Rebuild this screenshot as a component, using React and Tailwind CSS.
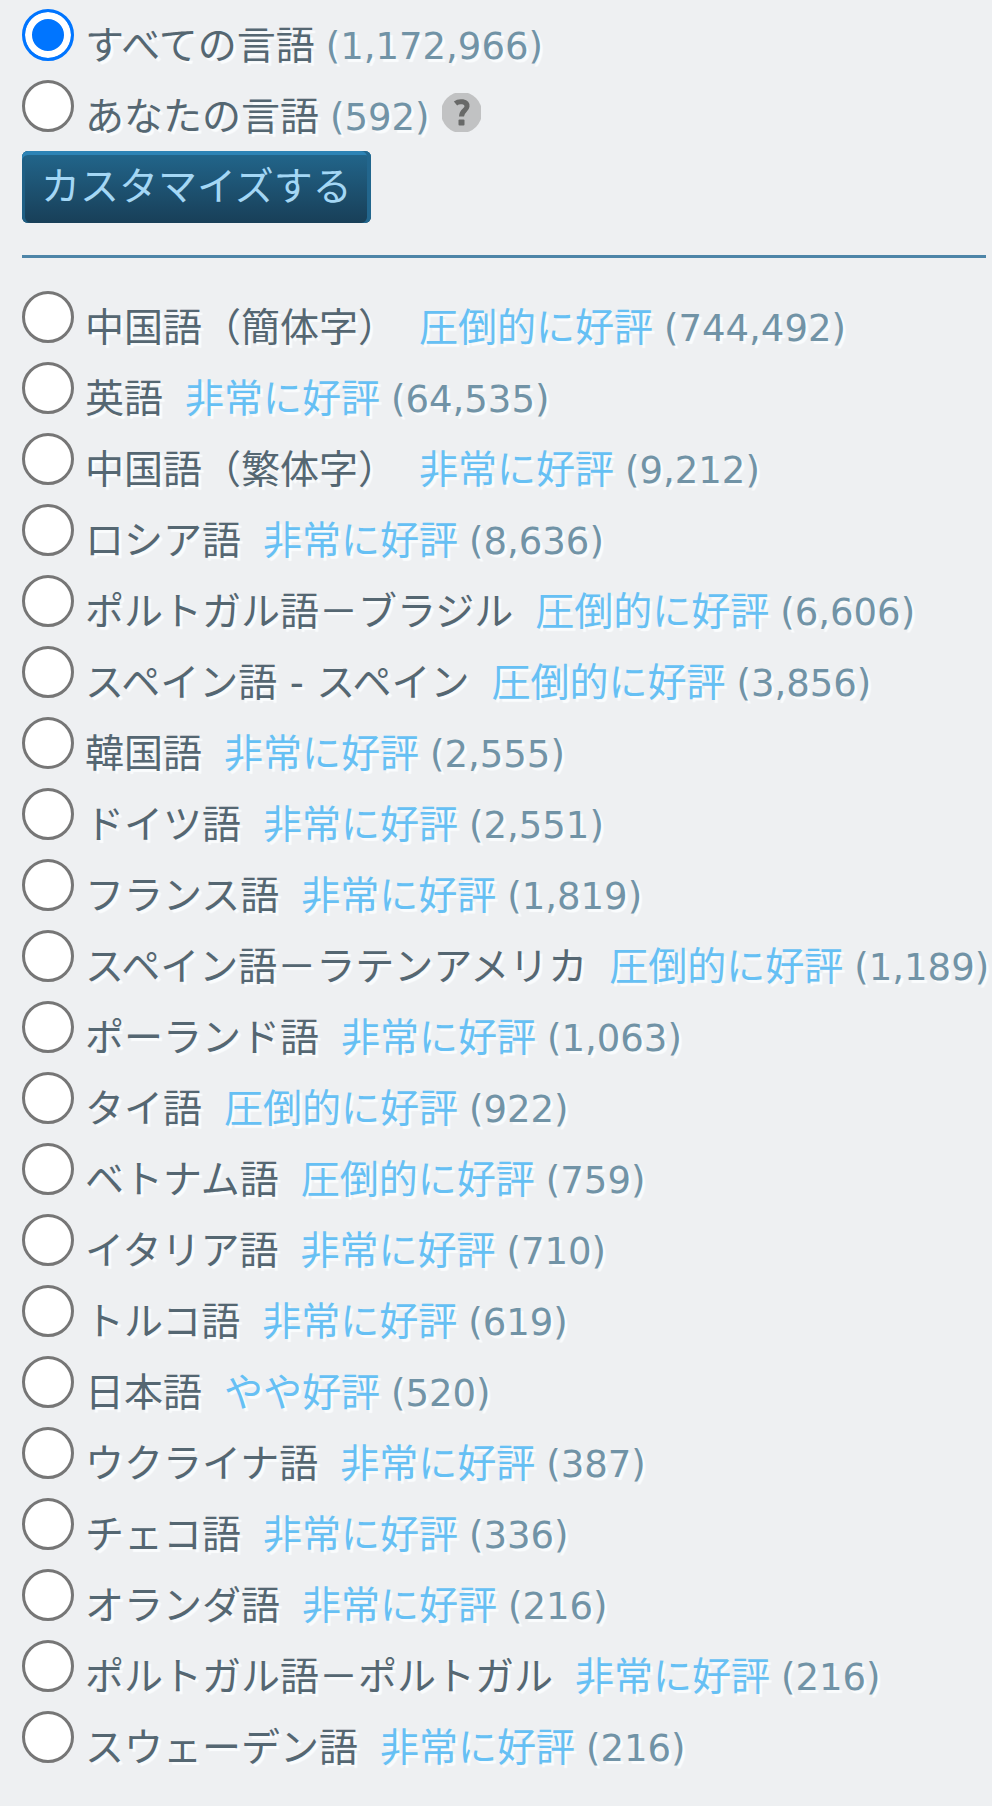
import { useState } from "react";

const languages = [
  { id: "schinese", name: "中国語（簡体字）", rating: "圧倒的に好評", count: "744,492" },
  { id: "english", name: "英語", rating: "非常に好評", count: "64,535" },
  { id: "tchinese", name: "中国語（繁体字）", rating: "非常に好評", count: "9,212" },
  { id: "russian", name: "ロシア語", rating: "非常に好評", count: "8,636" },
  { id: "brazilian", name: "ポルトガル語－ブラジル", rating: "圧倒的に好評", count: "6,606" },
  { id: "spanish", name: "スペイン語 - スペイン", rating: "圧倒的に好評", count: "3,856" },
  { id: "korean", name: "韓国語", rating: "非常に好評", count: "2,555" },
  { id: "german", name: "ドイツ語", rating: "非常に好評", count: "2,551" },
  { id: "french", name: "フランス語", rating: "非常に好評", count: "1,819" },
  { id: "latam", name: "スペイン語－ラテンアメリカ", rating: "圧倒的に好評", count: "1,189" },
  { id: "polish", name: "ポーランド語", rating: "非常に好評", count: "1,063" },
  { id: "thai", name: "タイ語", rating: "圧倒的に好評", count: "922" },
  { id: "vietnamese", name: "ベトナム語", rating: "圧倒的に好評", count: "759" },
  { id: "italian", name: "イタリア語", rating: "非常に好評", count: "710" },
  { id: "turkish", name: "トルコ語", rating: "非常に好評", count: "619" },
  { id: "japanese", name: "日本語", rating: "やや好評", count: "520" },
  { id: "ukrainian", name: "ウクライナ語", rating: "非常に好評", count: "387" },
  { id: "czech", name: "チェコ語", rating: "非常に好評", count: "336" },
  { id: "dutch", name: "オランダ語", rating: "非常に好評", count: "216" },
  { id: "portuguese", name: "ポルトガル語－ポルトガル", rating: "非常に好評", count: "216" },
  { id: "swedish", name: "スウェーデン語", rating: "非常に好評", count: "216" },
];

function HelpIcon() {
  return (
    <svg viewBox="0 0 39 39" className="size-[39px]" aria-hidden="true">
      <circle cx="19.5" cy="19.5" r="20.5" fill="#c1c2c3" />
      <path
        d="M13.5 10.5C17 7.5 25.5 8 25 13.5C24.6 17.5 19.5 17.5 19.5 23.5"
        fill="none"
        stroke="#686968"
        strokeWidth="5"
      />
      <rect x="16.5" y="26.5" width="6" height="6" rx="1" fill="#686968" />
    </svg>
  );
}

function LanguageOption({ id, name, rating, count, selected, onSelect, children }) {
  return (
    <div className="flex h-[71px] items-start">
      <input
        type="radio"
        id={id}
        name="review_language"
        checked={selected === id}
        onChange={() => onSelect(id)}
        className="size-[52px] shrink-0 cursor-pointer appearance-none rounded-full border-3 border-[#767676] bg-white checked:border-[#0075ff] checked:bg-[#0075ff] checked:shadow-[inset_0_0_0_7px_#fff]"
      />
      <label
        htmlFor={id}
        className="mt-3 ml-[11px] flex cursor-pointer items-baseline leading-[50px] whitespace-nowrap"
      >
        <span>{name}</span>
        {rating && <span className="ml-[22px] text-[#66c0f4]">{rating}</span>}
        <span className="ml-[11px] text-[37px] text-[#7193a6]">({count})</span>
      </label>
      {children}
    </div>
  );
}

export default function App() {
  const [selected, setSelected] = useState("all");

  return (
    <div className="min-h-screen bg-[#eef0f2] pt-[9px] pr-[6px] pb-6 pl-[22px] font-['DejaVu_Sans','Noto_Sans_CJK_JP',sans-serif] text-[39px] text-[#556772] [text-shadow:3px_3px_1px_#fafcfd]">
      <LanguageOption
        id="all"
        name="すべての言語"
        count="1,172,966"
        selected={selected}
        onSelect={setSelected}
      />
      <LanguageOption
        id="mine"
        name="あなたの言語"
        count="592"
        selected={selected}
        onSelect={setSelected}
      >
        <button type="button" aria-label="ヘルプ" className="mt-[13px] ml-3 cursor-pointer">
          <HelpIcon />
        </button>
      </LanguageOption>

      <button
        type="button"
        className="block h-[72px] cursor-pointer rounded-md bg-linear-to-b from-[#22678d] to-[#183f58] px-[19px] leading-[60px] text-[#a4d7f5] shadow-[inset_-4px_0_0_#22668d,inset_0_4px_0_#2d83b5,inset_3px_0_0_#1f5f84] [text-shadow:none]"
      >
        カスタマイズする
      </button>

      <hr className="mt-8 mb-[33px] border-t-3 border-[#4d85a8]" />

      {languages.map((lang) => (
        <LanguageOption
          key={lang.id}
          {...lang}
          selected={selected}
          onSelect={setSelected}
        />
      ))}
    </div>
  );
}
